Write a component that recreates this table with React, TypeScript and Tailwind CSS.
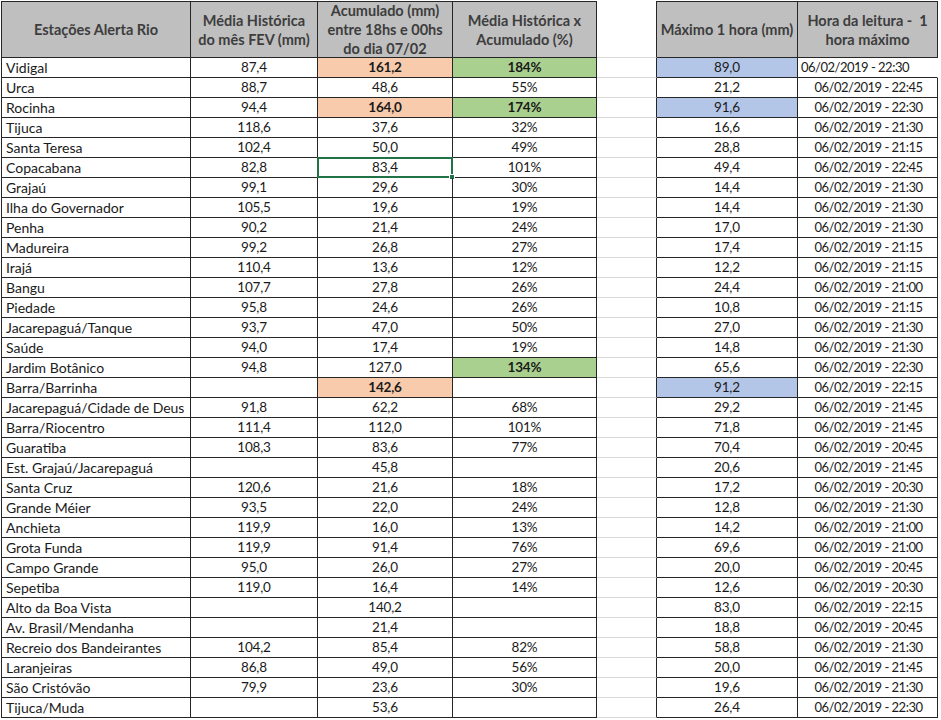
import React from 'react';

type Row = {
  name: string;
  media: string;
  acum: string;
  pct: string;
  max: string;
  hora: string;
  hiAcum?: boolean;
  hiPct?: boolean;
  hiMax?: boolean;
  selected?: boolean;
  leftHora?: boolean;
};

const d = (t: string) => `06/02/2019 - ${t}`;

const rows: Row[] = [
  { name: 'Vidigal', media: '87,4', acum: '161,2', pct: '184%', max: '89,0', hora: d('22:30'), hiAcum: true, hiPct: true, hiMax: true, leftHora: true },
  { name: 'Urca', media: '88,7', acum: '48,6', pct: '55%', max: '21,2', hora: d('22:45') },
  { name: 'Rocinha', media: '94,4', acum: '164,0', pct: '174%', max: '91,6', hora: d('22:30'), hiAcum: true, hiPct: true, hiMax: true },
  { name: 'Tijuca', media: '118,6', acum: '37,6', pct: '32%', max: '16,6', hora: d('21:30') },
  { name: 'Santa Teresa', media: '102,4', acum: '50,0', pct: '49%', max: '28,8', hora: d('21:15') },
  { name: 'Copacabana', media: '82,8', acum: '83,4', pct: '101%', max: '49,4', hora: d('22:45'), selected: true },
  { name: 'Grajaú', media: '99,1', acum: '29,6', pct: '30%', max: '14,4', hora: d('21:30') },
  { name: 'Ilha do Governador', media: '105,5', acum: '19,6', pct: '19%', max: '14,4', hora: d('21:30') },
  { name: 'Penha', media: '90,2', acum: '21,4', pct: '24%', max: '17,0', hora: d('21:30') },
  { name: 'Madureira', media: '99,2', acum: '26,8', pct: '27%', max: '17,4', hora: d('21:15') },
  { name: 'Irajá', media: '110,4', acum: '13,6', pct: '12%', max: '12,2', hora: d('21:15') },
  { name: 'Bangu', media: '107,7', acum: '27,8', pct: '26%', max: '24,4', hora: d('21:00') },
  { name: 'Piedade', media: '95,8', acum: '24,6', pct: '26%', max: '10,8', hora: d('21:15') },
  { name: 'Jacarepaguá/Tanque', media: '93,7', acum: '47,0', pct: '50%', max: '27,0', hora: d('21:30') },
  { name: 'Saúde', media: '94,0', acum: '17,4', pct: '19%', max: '14,8', hora: d('21:30') },
  { name: 'Jardim Botânico', media: '94,8', acum: '127,0', pct: '134%', max: '65,6', hora: d('22:30'), hiPct: true },
  { name: 'Barra/Barrinha', media: '', acum: '142,6', pct: '', max: '91,2', hora: d('22:15'), hiAcum: true, hiMax: true },
  { name: 'Jacarepaguá/Cidade de Deus', media: '91,8', acum: '62,2', pct: '68%', max: '29,2', hora: d('21:45') },
  { name: 'Barra/Riocentro', media: '111,4', acum: '112,0', pct: '101%', max: '71,8', hora: d('21:45') },
  { name: 'Guaratiba', media: '108,3', acum: '83,6', pct: '77%', max: '70,4', hora: d('20:45') },
  { name: 'Est. Grajaú/Jacarepaguá', media: '', acum: '45,8', pct: '', max: '20,6', hora: d('21:45') },
  { name: 'Santa Cruz', media: '120,6', acum: '21,6', pct: '18%', max: '17,2', hora: d('20:30') },
  { name: 'Grande Méier', media: '93,5', acum: '22,0', pct: '24%', max: '12,8', hora: d('21:30') },
  { name: 'Anchieta', media: '119,9', acum: '16,0', pct: '13%', max: '14,2', hora: d('21:00') },
  { name: 'Grota Funda', media: '119,9', acum: '91,4', pct: '76%', max: '69,6', hora: d('21:00') },
  { name: 'Campo Grande', media: '95,0', acum: '26,0', pct: '27%', max: '20,0', hora: d('20:45') },
  { name: 'Sepetiba', media: '119,0', acum: '16,4', pct: '14%', max: '12,6', hora: d('20:30') },
  { name: 'Alto da Boa Vista', media: '', acum: '140,2', pct: '', max: '83,0', hora: d('22:15') },
  { name: 'Av. Brasil/Mendanha', media: '', acum: '21,4', pct: '', max: '18,8', hora: d('20:45') },
  { name: 'Recreio dos Bandeirantes', media: '104,2', acum: '85,4', pct: '82%', max: '58,8', hora: d('21:30') },
  { name: 'Laranjeiras', media: '86,8', acum: '49,0', pct: '56%', max: '20,0', hora: d('21:45') },
  { name: 'São Cristóvão', media: '79,9', acum: '23,6', pct: '30%', max: '19,6', hora: d('21:30') },
  { name: 'Tijuca/Muda', media: '', acum: '53,6', pct: '', max: '26,4', hora: d('22:30') },
];

const cell = 'h-[20px] border-b border-r border-[#262626] flex items-center justify-center leading-none';
const num = 'text-[13.5px] tracking-[-0.2px]';
const head =
  'h-[57px] border-t border-b border-r border-[#262626] bg-[#bfbfbf] flex items-center justify-center text-center font-bold text-[#3d3d3d] text-[14.5px] leading-[19px]';

export default function App() {
  return (
    <div className="min-h-screen bg-white pt-px pl-px" style={{ fontFamily: 'Lato, "Liberation Sans", sans-serif' }}>
      <div className="grid grid-cols-[190px_127px_135px_144px_60px_141px_140px] text-[14px] text-[#1a1a1a]">
        <div className={`${head} border-l`}>Estações Alerta Rio</div>
        <div className={head}>
          Média Histórica
          <br />
          do mês FEV (mm)
        </div>
        <div className={head}>
          Acumulado (mm)
          <br />
          entre 18hs e 00hs
          <br />
          do dia 07/02
        </div>
        <div className={head}>
          Média Histórica x
          <br />
          Acumulado (%)
        </div>
        <div className="h-[57px] border-b border-r border-b-[#d9d9d9] border-r-[#262626]" />
        <div className={head}>Máximo 1 hora (mm)</div>
        <div className={head}>
          Hora da leitura -&nbsp; 1
          <br />
          hora máximo
        </div>

        {rows.map((r) => (
          <React.Fragment key={r.name}>
            <div className={`${cell} border-l !justify-start pl-[4px]`}>{r.name}</div>
            <div className={`${cell} ${num}`}>{r.media}</div>
            <div className={`${cell} ${num} relative ${r.hiAcum ? 'bg-[#f8cbad] font-bold' : ''}`}>
              {r.acum}
              {r.selected && (
                <>
                  <span className="absolute -left-px -top-px -right-px -bottom-px border-2 border-[#217346]" />
                  <span className="absolute -right-[3px] -bottom-[3px] w-[6px] h-[6px] bg-[#217346] border border-white" />
                </>
              )}
            </div>
            <div className={`${cell} ${num} ${r.hiPct ? 'bg-[#a9d08e] font-bold' : ''}`}>{r.pct}</div>
            <div className="h-[20px] border-b border-r border-b-[#d9d9d9] border-r-[#262626]" />
            <div className={`${cell} ${num} ${r.hiMax ? 'bg-[#b4c6e7]' : ''}`}>{r.max}</div>
            <div
              className={`${cell} text-[13px] tracking-[-0.5px] ${
                r.leftHora ? '!justify-start pl-[3px] !border-r-transparent' : 'pl-[2px]'
              }`}
            >
              {r.hora}
            </div>
          </React.Fragment>
        ))}
      </div>
    </div>
  );
}
